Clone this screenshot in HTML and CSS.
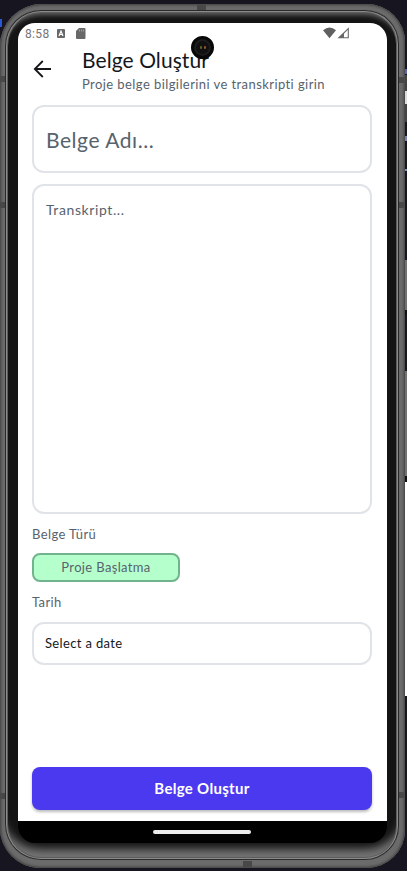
FILE: index.html
```html
<!DOCTYPE html>
<html lang="tr">
<head>
<meta charset="utf-8">
<title>Belge Oluştur</title>
<link rel="stylesheet" href="styles.css">
</head>
<body>
<div class="backdrop"></div>
<div class="phone">
  <i class="band band-top"></i><i class="band band-bottom"></i>
  <i class="band band-left l1"></i><i class="band band-left l2"></i><i class="band band-left l3"></i>
  <i class="band band-right r1"></i><i class="band band-right r2"></i><i class="band band-right r3"></i>
  <div class="rim">
    <div class="screen">
      <div class="app">
        <div class="status">
          <span class="clock">8:58</span>
          <svg class="ic-a" width="8" height="9" viewBox="0 0 8 9"><rect width="8" height="9" rx="1" fill="#686868"/><path d="M2 7 4 2 6 7M2.8 5.5h2.4" fill="none" stroke="#fff" stroke-width="1.2"/></svg>
          <svg class="ic-sd" width="10" height="11" viewBox="0 0 10 11"><path d="M3 0h5.5Q9.500 0 9.500 1v9q0 1-1 1h-7.500q-1 0-1-1V3z" fill="#686868"/><path d="M3.500 1.500v2M5.500 1.500v2M7.500 1.500v2" stroke="#aaa" stroke-width=".8"/></svg>
          <svg class="ic-net" width="27" height="12" viewBox="0 0 27 12"><path d="M0 3.200Q6.500-2.200 13 3.200L6.500 11.300z" fill="#606060"/><path d="M25.300 1.500v9.300H16z" fill="none" stroke="#686868" stroke-width="1.100"/><path d="M21 5.500v5.500h-6z" fill="#686868"/></svg>
        </div>
        <header class="header">
          <svg class="back" width="20" height="20" viewBox="0 0 20 20"><path d="M18 10H2M9.800 2 1.800 10l8 8" fill="none" stroke="#14181b" stroke-width="1.800"/></svg>
          <div class="headings">
            <h1>Belge Oluştur</h1>
            <p>Proje belge bilgilerini ve transkripti girin</p>
          </div>
        </header>
        <main class="form">
          <div class="field name"><span>Belge Adı...</span></div>
          <div class="field transcript"><span>Transkript...</span></div>
          <div class="label type-label"><span>Belge Türü</span></div>
          <div class="chip"><span>Proje Başlatma</span></div>
          <div class="label date-label"><span>Tarih</span></div>
          <div class="field date"><span>Select a date</span></div>
          <div class="submit"><span>Belge Oluştur</span></div>
        </main>
      </div>
      <div class="nav"><i></i></div>
    </div>
  </div>
  <div class="camera"><i></i><i></i></div>
</div>
</body>
</html>
```
FILE: styles.css
```css
* { box-sizing: border-box; }
body { margin: 0; width: 407px; height: 871px; overflow: hidden; background: #171620; font-family: Lato, "Noto Sans", sans-serif; position: relative; padding-top: 4px; }
.backdrop { position: absolute; left: 0; top: 0; width: 407px; height: 871px;
  background:
    linear-gradient(#5966a0, #5966a0) 405px 69px / 2px 5px no-repeat,
    linear-gradient(#ddd, #ddd) 405px 91px / 2px 13px no-repeat,
    linear-gradient(#444, #444) 405px 75px / 2px 47px no-repeat,
    linear-gradient(#7582ad, #7582ad) 405px 136px / 2px 5px no-repeat,
    linear-gradient(#8290bd, #8290bd) 405px 169px / 2px 2px no-repeat,
    linear-gradient(#727272, #727272) 404px 260px / 3px 50px no-repeat,
    linear-gradient(#111, #111) 404px 310px / 3px 5px no-repeat,
    linear-gradient(#727272, #727272) 404px 371px / 3px 105px no-repeat,
    linear-gradient(#111, #111) 404px 476px / 3px 5px no-repeat,
    linear-gradient(#fff, #fff) 405px 482px / 2px 214px no-repeat,
    linear-gradient(#2857d6, #2857d6) 0 19px / 2px 8px no-repeat; }
.phone { position: relative; width: 405px; height: 864px; padding: 6px 6px 8px 5px; border-radius: 42px 38px 38px 40px; overflow: hidden;
  background: #6b6b6b; box-shadow: inset 0 0 0 1px #4c4c4c, inset 0 0 2px 2px #565656; }
.rim { width: 394px; height: 850px; padding: 13px 12px 18px 13px; border-radius: 36px 34px 34px 36px; background: #141414;
  box-shadow: inset 0 0 0 1px #292929, inset 0 0 0 2px #8b8b8b, inset 0 0 0 3px #5c5c5c, inset 0 8px 5px -3px #656565, inset 0 -16px 9px -5px #747474; }
.screen { width: 369px; height: 820px; background: #000; border-radius: 17px; overflow: hidden; }
.app { height: 798px; background: #fff; padding: 0 15px 0 14px; }
.status { height: 21px; display: flex; align-items: center; margin-left: -7px; color: #747474; }
.clock { font-family: Roboto, sans-serif; font-size: 12px; letter-spacing: .35px; width: 32px; line-height: 21px; padding-top: 1px; }
.ic-sd { margin-left: 11px; }
.ic-net { margin-left: 237px; margin-top: -1px; }
.header { height: 61px; display: flex; }
.back { margin: 15px 0 0 1px; }
.headings { margin-left: 29px; white-space: nowrap; }
h1 { margin: 2px 0 0; font-size: 21px; line-height: 27px; font-weight: 400; color: #14181b; letter-spacing: .08px; }
p { margin: 3px 0 0; font-size: 13px; line-height: 17px; color: #57636c; letter-spacing: .42px; }
.form { display: flex; flex-direction: column; white-space: nowrap; }
.field { border: 2px solid #e0e3e7; border-radius: 12px; padding-left: 12px; color: #57636c; }
.name { height: 68px; font-size: 21px; line-height: 66px; letter-spacing: .55px; }
.transcript { margin-top: 11px; height: 330px; font-size: 14px; line-height: 20px; padding-top: 14px; letter-spacing: .6px; }
.label { height: 20px; font-size: 13px; line-height: 20px; color: #57636c; letter-spacing: .4px; }
.type-label { margin-top: 10px; }
.chip { margin-top: 9px; width: 148px; height: 29px; border: 2px solid #72b38d; border-radius: 8px; background: #b5ffcc; color: #57636c; text-align: center; font-size: 13px; line-height: 25px; letter-spacing: .35px; }
.date-label { margin-top: 10px; }
.date { margin-top: 10px; height: 43px; padding-left: 11px; color: #14181b; font-size: 13px; line-height: 39px; letter-spacing: .35px; }
.submit { margin-top: 102px; height: 43px; border-radius: 8px; background: #4b39ef; color: #fff; text-align: center; font-size: 15px; font-weight: 700; line-height: 43px; letter-spacing: .3px; box-shadow: 0 2px 3px #0004; }
.nav { height: 22px; padding-top: 9px; }
.nav i { display: block; width: 98px; height: 4px; border-radius: 2px; background: #ececec; margin-left: 135px; }
.camera { position: absolute; left: 191px; top: 32px; width: 23px; height: 23px; border-radius: 50%; background: #101010; border: 3px solid #080808; box-shadow: inset 0 0 0 2px #1d1d1d; display: flex; justify-content: center; align-items: center; gap: 2px; }
.camera i { width: 2px; height: 3px; border-radius: 1px; background: #59602c; }
.camera i + i { background: #9a512a; }
.band { position: absolute; background: #484848; }
.band-top { left: 197px; top: 1px; width: 9px; height: 5px; }
.band-bottom { left: 243px; bottom: 1px; width: 9px; height: 6px; }
.band-left { left: 0; width: 5px; height: 6px; }
.band-right { right: 1px; width: 5px; height: 6px; }
.l1 { top: 72px; } .l2 { top: 198px; } .l3 { top: 789px; }
.r1 { top: 73px; } .r2 { top: 198px; } .r3 { top: 788px; }
```
